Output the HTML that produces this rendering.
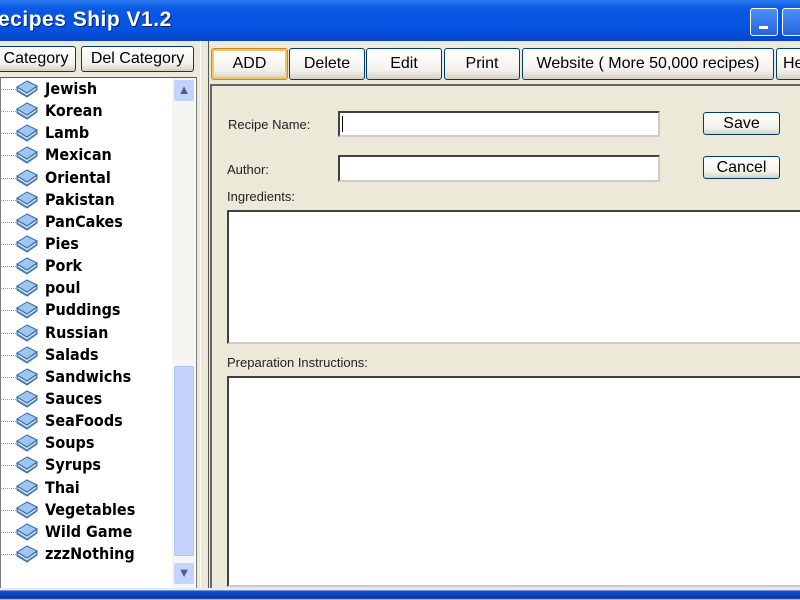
<!DOCTYPE html>
<html><head><style>
*{margin:0;padding:0;box-sizing:border-box}
body{width:800px;height:600px;overflow:hidden;background:#ece9d8;font-family:"Liberation Sans",Tahoma,sans-serif;position:relative}
.abs{position:absolute}
.title{left:0;top:0;width:800px;height:41px;background:linear-gradient(#2d7cf0 0%,#0a5ae6 20%,#0553e0 70%,#0845c8 100%)}
.title span{position:absolute;left:-2px;top:8px;color:#fff;font-weight:bold;font-size:21px;letter-spacing:0.5px;text-shadow:1px 1px #0a1f70}
.btn{position:absolute;border:1px solid #003c74;border-radius:3px;background:linear-gradient(#fff,#f3f2ec 70%,#d6d0c5);font-size:16px;color:#000;text-align:center;display:flex;align-items:center;justify-content:center}
.tree{left:0;top:77px;width:197px;height:512px;background:#fff;border:1px solid #7a7a7a;border-top-color:#555}
.row{position:absolute;left:0;height:22px;width:170px}
.row .dot{position:absolute;left:0;top:11px;width:16px;border-top:1px dotted #999}
.row svg{position:absolute;left:15px;top:1px}
.row b{position:absolute;left:45px;top:1px;font-size:16px;font-family:"DejaVu Sans Condensed","DejaVu Sans",sans-serif;font-weight:bold;letter-spacing:0}
.sb{left:172px;top:78px;width:23px;height:508px;background:#f5f6f1}
.lbl{position:absolute;font-size:13px;color:#222}
.inp{position:absolute;background:#fff;border:2px solid #404040;border-right-color:#ccc;border-bottom-color:#ccc}
</style></head><body>
<div class="abs title"><span>ecipes Ship V1.2</span>
<div class="abs" style="left:750px;top:8px;width:28px;height:28px;border:1px solid #fff;border-radius:3px;background:linear-gradient(#4f8ff8,#2463de)"><div class="abs" style="left:8px;top:17px;width:9px;height:3px;background:#fff"></div></div>
<div class="abs" style="left:782px;top:8px;width:30px;height:28px;border:1px solid #fff;border-radius:3px;background:linear-gradient(#4f8ff8,#2463de)"></div>
</div>
<div class="btn" style="left:-4px;top:46px;width:80px;height:26px">Category</div>
<div class="btn" style="left:81px;top:46px;width:113px;height:26px">Del Category</div>
<div class="abs" style="left:200px;top:41px;width:1px;height:550px;background:#fff"></div>
<div class="abs" style="left:208px;top:41px;width:1px;height:548px;background:#555"></div>
<div class="btn" style="left:211px;top:48px;width:77px;height:32px;border-color:#c28a30;box-shadow:inset 0 0 0 2px #f6c35a">ADD</div>
<div class="btn" style="left:289px;top:48px;width:76px;height:32px">Delete</div>
<div class="btn" style="left:366px;top:48px;width:76px;height:32px">Edit</div>
<div class="btn" style="left:444px;top:48px;width:76px;height:32px">Print</div>
<div class="btn" style="left:522px;top:48px;width:252px;height:32px">Website ( More 50,000 recipes)</div>
<div class="btn" style="left:776px;top:48px;width:40px;height:32px;justify-content:flex-start;padding-left:6px">Help</div>
<div class="abs" style="left:210px;top:84px;width:590px;height:2px;background:#666"></div>
<div class="abs" style="left:210px;top:84px;width:2px;height:504px;background:#666"></div>
<div class="tree abs">
<div class="abs sb" style="left:171px;top:0;height:510px"></div>
<div class="abs" style="left:173px;top:2px;width:20px;height:21px;background:#c4d3fb;border-radius:2px;color:#4d6185;font-size:13px;text-align:center;line-height:20px">&#9650;</div>
<div class="abs" style="left:173px;top:288px;width:20px;height:190px;background:#c4d3fb;border:1px solid #b0c3f3;border-radius:2px"></div>
<div class="abs" style="left:173px;top:485px;width:20px;height:21px;background:#c4d3fb;border-radius:2px;color:#4d6185;font-size:13px;text-align:center;line-height:20px">&#9660;</div>
</div>
<div id="rows"></div>
<div class="lbl" style="left:228px;top:117px">Recipe Name:</div>
<div class="inp" style="left:338px;top:111px;width:322px;height:26px"><div style="position:absolute;left:2px;top:3px;width:1px;height:16px;background:#000"></div></div>
<div class="lbl" style="left:227px;top:162px">Author:</div>
<div class="inp" style="left:338px;top:155px;width:322px;height:27px"></div>
<div class="btn" style="left:703px;top:112px;width:77px;height:23px">Save</div>
<div class="btn" style="left:703px;top:156px;width:77px;height:23px">Cancel</div>
<div class="lbl" style="left:227px;top:189px">Ingredients:</div>
<div class="inp" style="left:227px;top:210px;width:580px;height:134px"></div>
<div class="lbl" style="left:227px;top:355px">Preparation Instructions:</div>
<div class="inp" style="left:227px;top:376px;width:580px;height:211px"></div>
<div class="abs" style="left:0;top:588px;width:800px;height:12px;background:linear-gradient(#e8eaf5 0,#e8eaf5 15%,#1a4fd0 25%,#0a3cb8 70%,#0a2e90 85%,#dde 100%)"></div>
<script>
var n=["Jewish","Korean","Lamb","Mexican","Oriental","Pakistan","PanCakes","Pies","Pork","poul","Puddings","Russian","Salads","Sandwichs","Sauces","SeaFoods","Soups","Syrups","Thai","Vegetables","Wild Game","zzzNothing"];
var h="";
var ic='<svg width="24" height="20" viewBox="0 0 24 20"><path d="M2 8 L12 2 L22 7 L12 14 Z" fill="#9fc6f0" stroke="#3a6ea8"/><path d="M2 8 L2 12 L12 18 L22 11 L22 7 L12 14 Z" fill="#5a8fd0" stroke="#3a6ea8"/><path d="M3 10 L12 15.5 L21 9.5" stroke="#fff" fill="none"/></svg>';
for(var i=0;i<n.length;i++){h+='<div class="row" style="top:'+(78+i*22.14)+'px"><div class="dot"></div>'+ic+'<b>'+n[i]+'</b></div>';}
document.getElementById("rows").innerHTML=h;
</script>
</body></html>
